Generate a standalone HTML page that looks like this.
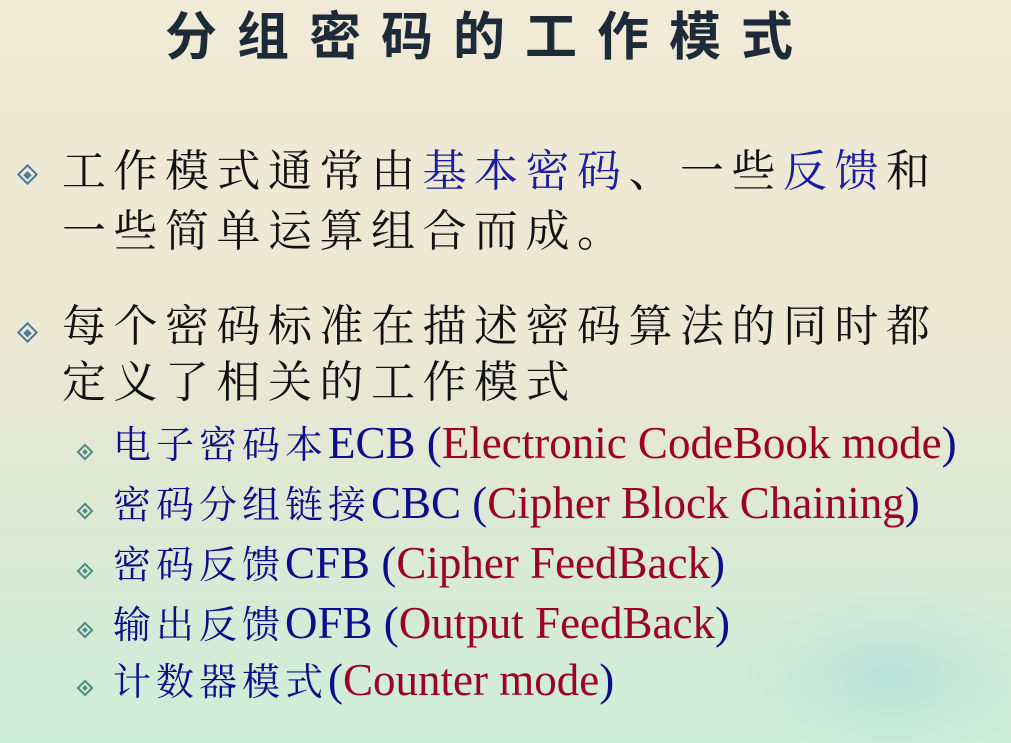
<!DOCTYPE html>
<html><head><meta charset="utf-8"><style>
html,body{margin:0;padding:0}
body{width:1011px;height:743px;overflow:hidden;position:relative;
background:linear-gradient(180deg,#f0ead6 0%,#ece8d4 45%,#dce9d4 70%,#cdeed9 100%);
font-family:"Liberation Serif","Noto Serif CJK SC",serif}
.t{position:absolute;left:165px;top:12px;font-size:52px;line-height:1;font-weight:bold;color:#1d2b38;letter-spacing:20px;font-family:"Liberation Sans","Noto Sans CJK SC",sans-serif;white-space:nowrap}
.l{position:absolute;white-space:nowrap;line-height:1}
.m{left:62px;font-size:44px;letter-spacing:7.5px;color:#111}
.s{left:113px;font-size:45px;color:#0c0c8c}
.s .c{font-size:38px;letter-spacing:5px}
.b{color:#1c1ca0}
.r{color:#9c0022}
.d{position:absolute;width:11px;height:11px;border:2px solid #4e7b9c;transform:rotate(45deg)}
.d::after{content:"";position:absolute;left:2.5px;top:2.5px;width:6px;height:6px;background:#4e7b9c}
.ds{width:8px;height:8px;border-color:#4e8a86}
.ds::after{left:2px;top:2px;width:4px;height:4px;background:#4e8a86}
.snow{position:absolute;right:0;bottom:0;width:300px;height:170px;background:radial-gradient(ellipse at 60% 60%,rgba(160,215,220,.45),rgba(160,215,220,0) 65%)}
</style></head><body>
<div class="snow"></div>
<div class="t">分组密码的工作模式</div>
<div class="d" style="left:20px;top:167px"></div>
<div class="l m" style="top:150px">工作模式通常由<span class="b">基本密码</span>、一些<span class="b">反馈</span>和</div>
<div class="l m" style="top:210px">一些简单运算组合而成。</div>
<div class="d" style="left:20px;top:325px"></div>
<div class="l m" style="top:305px">每个密码标准在描述密码算法的同时都</div>
<div class="l m" style="top:361px">定义了相关的工作模式</div>
<div class="d ds" style="left:79px;top:446px"></div>
<div class="l s" style="top:421px"><span class="c">电子密码本</span>ECB (<span class="r">Electronic CodeBook mode</span>)</div>
<div class="d ds" style="left:79px;top:505px"></div>
<div class="l s" style="top:481px"><span class="c">密码分组链接</span>CBC (<span class="r">Cipher Block Chaining</span>)</div>
<div class="d ds" style="left:79px;top:565px"></div>
<div class="l s" style="top:541px"><span class="c">密码反馈</span>CFB (<span class="r">Cipher FeedBack</span>)</div>
<div class="d ds" style="left:79px;top:624px"></div>
<div class="l s" style="top:601px"><span class="c">输出反馈</span>OFB (<span class="r">Output FeedBack</span>)</div>
<div class="d ds" style="left:79px;top:682px"></div>
<div class="l s" style="top:658px"><span class="c">计数器模式</span>(<span class="r">Counter mode</span>)</div>
</body></html>
